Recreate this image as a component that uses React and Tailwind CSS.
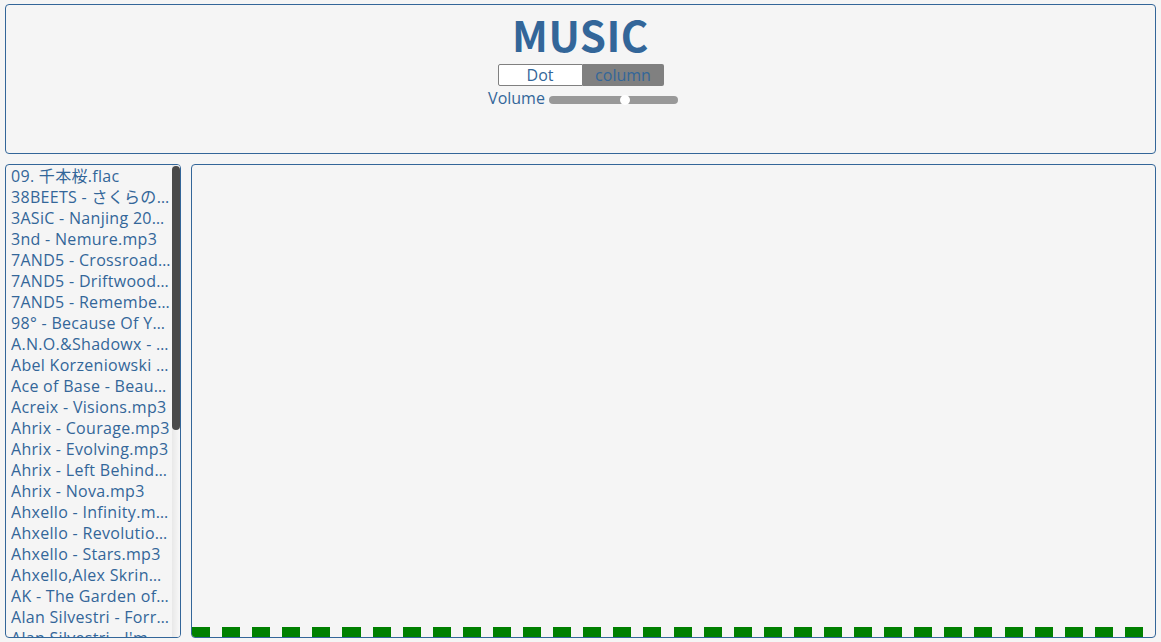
import React from "react";

const songs = [
  "09. 千本桜.flac",
  "38BEETS - さくらのうた.mp3",
  "3ASiC - Nanjing 2015.mp3",
  "3nd - Nemure.mp3",
  "7AND5 - Crossroads.mp3",
  "7AND5 - Driftwood.mp3",
  "7AND5 - Remember.mp3",
  "98° - Because Of You.mp3",
  "A.N.O.&Shadowx - Kagerou.mp3",
  "Abel Korzeniowski - Table for Two.mp3",
  "Ace of Base - Beautiful Life.mp3",
  "Acreix - Visions.mp3",
  "Ahrix - Courage.mp3",
  "Ahrix - Evolving.mp3",
  "Ahrix - Left Behind.mp3",
  "Ahrix - Nova.mp3",
  "Ahxello - Infinity.mp3",
  "Ahxello - Revolution.mp3",
  "Ahxello - Stars.mp3",
  "Ahxello,Alex Skrindo - Trip.mp3",
  "AK - The Garden of Words.mp3",
  "Alan Silvestri - Forrest Gump Suite.mp3",
  "Alan Silvestri - I'm Forrest.mp3",
];

const bars = Array.from({ length: 32 }, (_, i) => i);

export default function App() {
  return (
    <div
      className="w-[1161px] h-[642px] bg-[#f5f5f5] overflow-hidden flex flex-col px-[5px] pt-[4px] pb-[4px] gap-[10px] text-[#336699]"
      style={{ fontFamily: '"Open Sans", "Noto Sans CJK JP", sans-serif' }}
    >
      <div className="h-[150px] shrink-0 border border-[#336699] rounded-[4px] flex flex-col items-center pt-[6px]">
        <div
          className="text-[42px] font-bold leading-[46px] tracking-[0.5px]"
          style={{ fontFamily: '"Noto Sans CJK SC", sans-serif' }}
        >
          MUSIC
        </div>
        <div className="flex h-[22px] mt-[7px] text-[16px] leading-[20px]">
          <div className="w-[85px] bg-white border border-[#808080] rounded-l-[2px] text-center">Dot</div>
          <div className="w-[81px] bg-[#808080] rounded-r-[2px] text-center leading-[22px]">column</div>
        </div>
        <div className="flex items-center h-[20px] mt-[2px] text-[16px] ml-[5px]">
          <span className="leading-[20px]">Volume</span>
          <div className="relative ml-[4px] w-[129px] h-[8px] bg-[#999999] rounded-full mt-[3px]">
            <div className="absolute left-[71px] top-[-1px] w-[10px] h-[10px] bg-white rounded-full"></div>
          </div>
        </div>
      </div>
      <div className="flex-1 flex gap-[10px] min-h-0">
        <div className="w-[176px] shrink-0 border border-[#336699] rounded-[4px] flex overflow-hidden">
          <div className="flex-1 min-w-0 pl-[5px] pr-[1px] pt-[1px] text-[16px] leading-[21px] overflow-hidden tracking-[0.3px]">
            {songs.map((s, i) => (
              <div key={i} className="truncate">{s}</div>
            ))}
          </div>
          <div className="w-[8px] shrink-0 bg-gradient-to-r from-[#e8e8e8] to-[#f8f8f8] pt-[1px]">
            <div className="h-[264px] bg-[#4a4a4a] rounded-full"></div>
          </div>
        </div>
        <div className="flex-1 border border-[#336699] rounded-[4px] flex items-end overflow-hidden">
          <div className="flex w-full h-[10px]">
            {bars.map((i) => (
              <div key={i} className="flex-1">
                <div className="w-[60%] h-full bg-[#008000]"></div>
              </div>
            ))}
          </div>
        </div>
      </div>
    </div>
  );
}
